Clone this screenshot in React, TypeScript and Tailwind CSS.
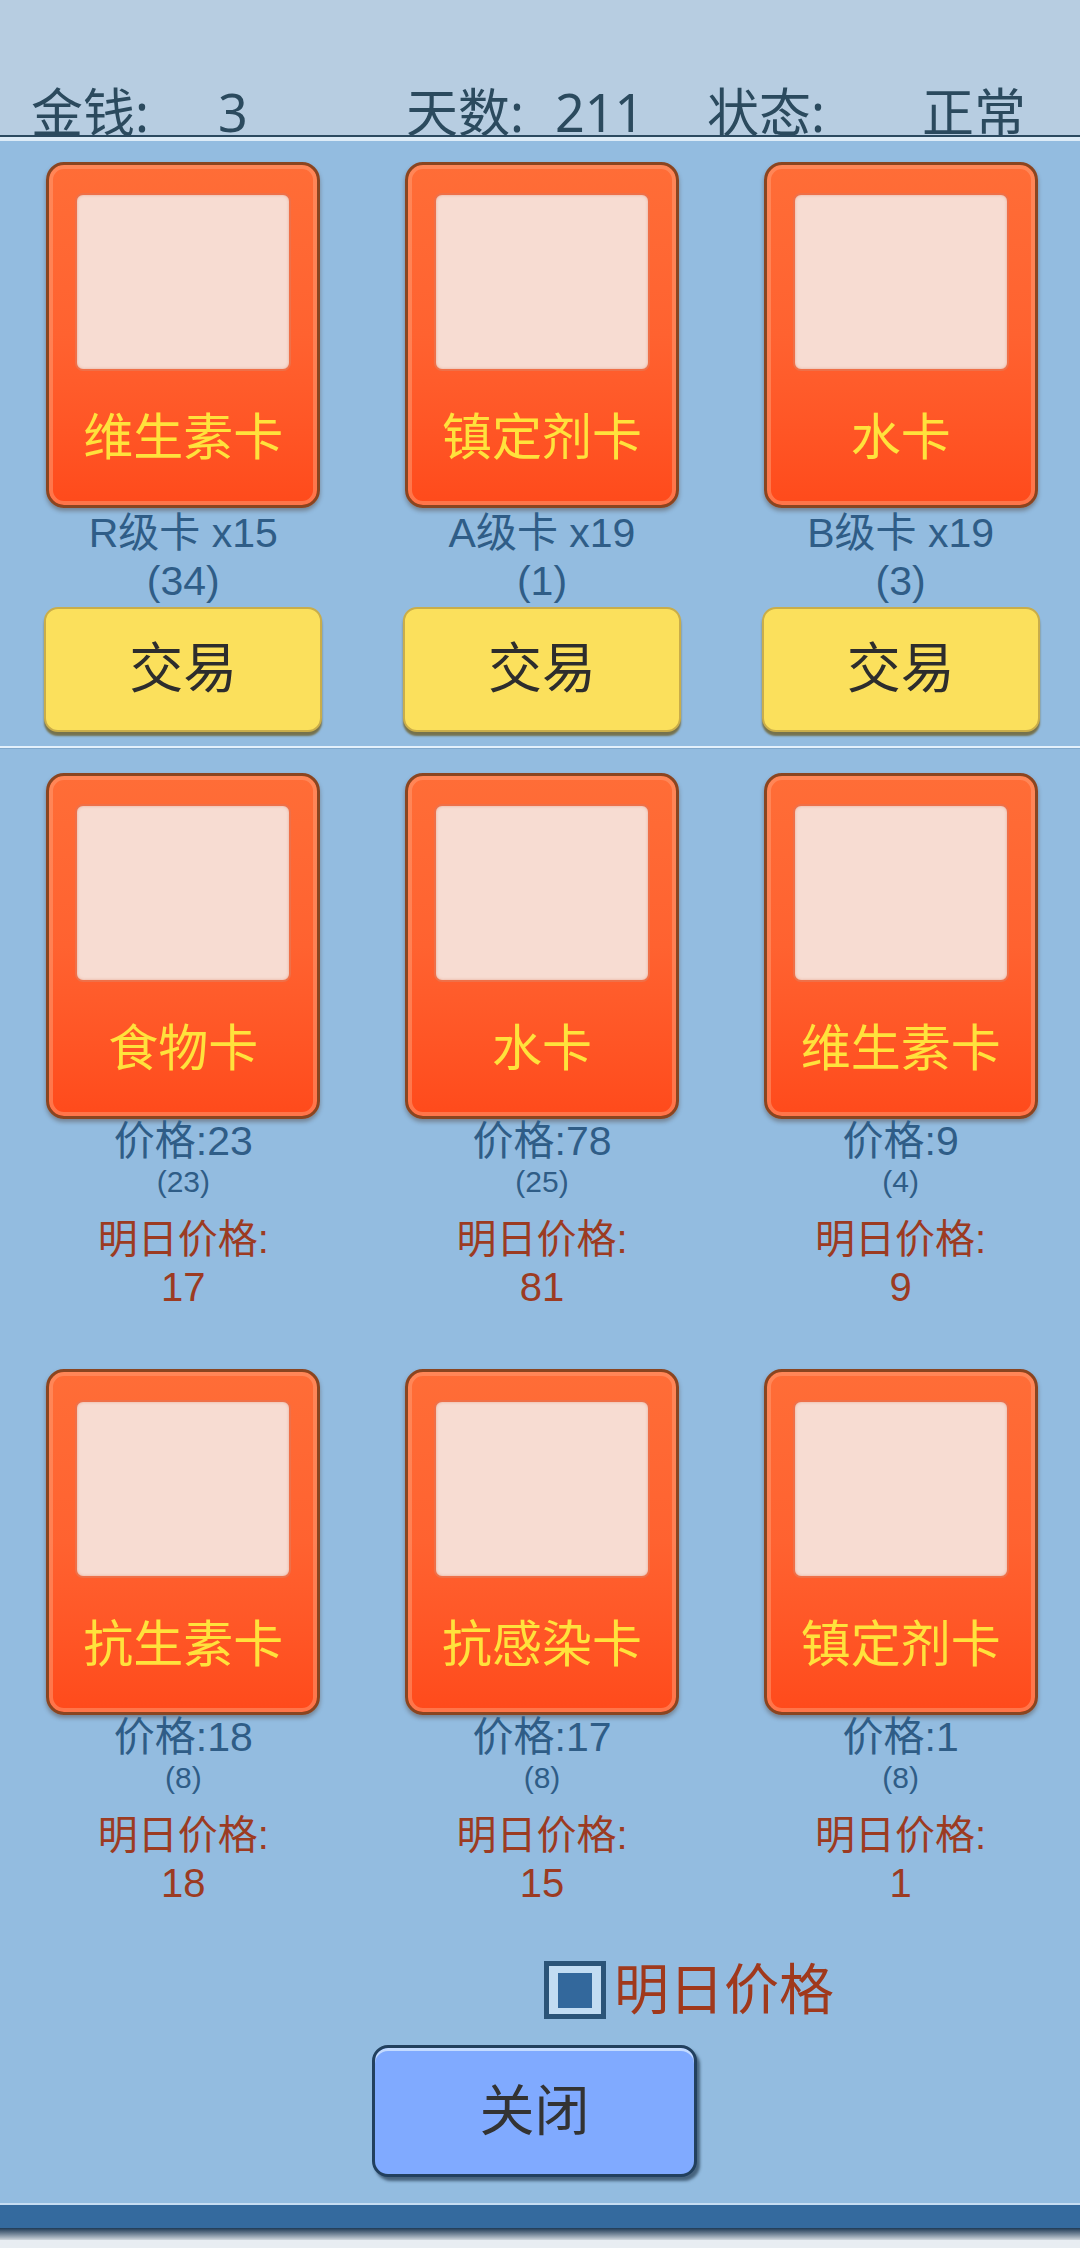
import React from "react";

const FONT = { fontFamily: '"Liberation Sans", "Noto Sans CJK SC", sans-serif' };
const HFONT = { fontFamily: '"Noto Sans", "Noto Sans CJK SC", sans-serif' };

function Card({ name }: { name: string }) {
  return (
    <div className="w-[274px] h-[346px] rounded-[18px] border-[3px] border-[#8a4520] bg-gradient-to-b from-[#ff6d37] via-[#ff6230] to-[#ff4a1b] shadow-[inset_0_0_0_4px_rgba(255,160,120,0.5),0_3px_4px_rgba(60,30,10,0.35)] flex flex-col items-center pt-[28px]">
      <div className="w-[216px] h-[178px] rounded-[8px] bg-[#f7dcd2] border-2 border-[#ef7048] shadow-[inset_0_0_3px_rgba(200,80,40,0.35)]" />
      <div className="flex-1 flex items-center justify-center text-[50px] leading-none text-[#ffe23c]">{name}</div>
    </div>
  );
}

function TradeCol({ name, grade, count }: { name: string; grade: string; count: string }) {
  return (
    <div className="flex flex-col items-center">
      <Card name={name} />
      <div className="mt-[1px] text-[41px] leading-[48px] text-[#2f5d87] text-center">
        <div>{grade}</div>
        <div>{count}</div>
      </div>
      <button className="mt-[2px] w-[278px] h-[125px] rounded-[14px] bg-[#fbe05c] border-2 border-[#c9ad4a] shadow-[0_4px_2px_rgba(110,95,40,0.8)] text-[54px] text-[#2d2d2d] flex items-center justify-center">
        交易
      </button>
    </div>
  );
}

function MarketCol({ name, price, avg, next }: { name: string; price: string; avg: string; next: string }) {
  return (
    <div className="flex flex-col items-center">
      <Card name={name} />
      <div className="text-center">
        <div className="text-[41px] leading-[44px] text-[#2f5d87]">价格:{price}</div>
        <div className="text-[30px] leading-[38px] text-[#2f5d87]">({avg})</div>
        <div className="mt-[14px] text-[40px] leading-[48px] text-[#9c3b22]">明日价格:</div>
        <div className="text-[40px] leading-[48px] text-[#9c3b22]">{next}</div>
      </div>
    </div>
  );
}

export default function App() {
  return (
    <div className="w-[1080px] h-[2248px] overflow-hidden flex flex-col bg-[#93bce0]" style={FONT}>
      <div className="h-[135px] bg-[#b7cde1] pt-[89px] flex text-[52px] leading-[46px] text-[#2b4a5e] pl-[31px]" style={HFONT}>
        <span className="w-[187px]">金钱:</span>
        <span className="w-[188px]">3</span>
        <span className="w-[149px]">天数:</span>
        <span className="w-[152px]">211</span>
        <span className="w-[215px]">状态:</span>
        <span>正常</span>
      </div>
      <div className="h-[2px] bg-[#2b4a60]" />
      <div className="h-[4px] bg-[#dcebf7]" />

      <div className="grid grid-cols-3 pl-[4px] pt-[21px]">
        <TradeCol name="维生素卡" grade="R级卡 x15" count="(34)" />
        <TradeCol name="镇定剂卡" grade="A级卡 x19" count="(1)" />
        <TradeCol name="水卡" grade="B级卡 x19" count="(3)" />
      </div>

      <div className="mt-[14px] h-[2px] bg-[#e3f0fb]" />
      <div className="h-[1px] bg-[#80a8cc]" />

      <div className="grid grid-cols-3 pl-[4px] pt-[24px]">
        <MarketCol name="食物卡" price="23" avg="23" next="17" />
        <MarketCol name="水卡" price="78" avg="25" next="81" />
        <MarketCol name="维生素卡" price="9" avg="4" next="9" />
      </div>

      <div className="grid grid-cols-3 pl-[4px] pt-[58px]">
        <MarketCol name="抗生素卡" price="18" avg="8" next="18" />
        <MarketCol name="抗感染卡" price="17" avg="8" next="15" />
        <MarketCol name="镇定剂卡" price="1" avg="8" next="1" />
      </div>

      <div className="mt-[54px] flex items-center pl-[544px]">
        <div className="w-[62px] h-[58px] border-[5px] border-[#2b5478] bg-[#c2dcf2] flex items-center justify-center">
          <div className="w-[34px] h-[35px] bg-[#33689c]" />
        </div>
        <span className="ml-[8px] text-[55px] leading-[58px] text-[#a0391c]">明日价格</span>
      </div>

      <div className="mt-[26px] pl-[372px]">
        <button className="w-[325px] h-[132px] rounded-[16px] bg-[#80aaff] border-[3px] border-[#22405e] shadow-[inset_0_3px_0_#c4dbff,3px_4px_3px_rgba(20,40,60,0.6)] text-[55px] text-[#333333] flex items-center justify-center">
          关闭
        </button>
      </div>

      <div className="mt-auto">
        <div className="h-[2px] bg-[#c6ddf2]" />
        <div className="h-[23px] bg-[#346a9e]" />
        <div className="h-[12px] bg-gradient-to-b from-[#1f3a55] to-[#cfd6dc]" />
        <div className="h-[8px] bg-[#e8edf2]" />
      </div>
    </div>
  );
}
